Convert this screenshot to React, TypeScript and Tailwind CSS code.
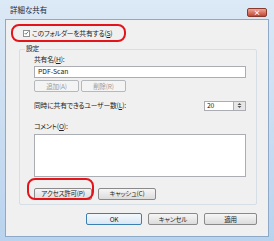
import React from "react"

const font = "font-['Noto_Sans_CJK_JP',sans-serif] [font-feature-settings:'palt']"

const Btn: React.FC<{ label: string; w: string; disabled?: boolean; primary?: boolean }> = ({
  label,
  w,
  disabled,
  primary,
}) => (
  <div
    className={`${w} h-[12px] flex items-center justify-center rounded-[2px] border text-[6.5px] leading-none ${
      disabled
        ? "border-[#b5b9bc] bg-[#f4f4f4] text-[#9a9a9a]"
        : primary
        ? "border-[#3c7fb1] bg-gradient-to-b from-[#f4f9fd] to-[#d9e7f3] text-[#222]"
        : "border-[#8a8a8a] bg-gradient-to-b from-[#f6f6f6] to-[#dcdcdc] text-[#222]"
    }`}
  >
    {label}
  </div>
)

const App: React.FC = () => {
  return (
    <div className={`w-[274px] h-[241px] overflow-hidden bg-gradient-to-b from-[#dce9f6] to-[#b9d3ee] flex flex-col ${font}`}>
      {/* Title bar */}
      <div className="h-[19px] flex items-start justify-between pl-[10px] pr-[7px] shrink-0">
        <span className="text-[7.5px] text-[#1e2a3a] mt-[6px] leading-none">詳細な共有</span>
        <div className="mt-[8px] w-[20px] h-[9px] rounded-[2px] border border-[#8a3a2c] bg-gradient-to-b from-[#e9a89a] to-[#c4442c] flex items-center justify-center text-white text-[7px] leading-none font-bold">
          ×
        </div>
      </div>

      {/* Client area */}
      <div className="relative flex-1 ml-[5px] mr-[5px] mb-[4px] bg-[#f0f0f0] border border-[#8ea9c7] text-[#222] text-[6.8px] tracking-[-0.2px]">
        {/* Share checkbox */}
        <div className="flex items-center h-[10px] mt-[8px] ml-[17px] gap-[2px]">
          <div className="w-[7px] h-[7px] border border-[#8e8f8f] bg-white flex items-center justify-center">
            <svg viewBox="0 0 8 8" className="w-[6px] h-[6px]">
              <path d="M1 4 L3 6 L7 1.5" stroke="#4a5f7a" strokeWidth="1.3" fill="none" />
            </svg>
          </div>
          <span className="leading-none">このフォルダーを共有する(<span className="underline">S</span>)</span>
        </div>

        {/* Group box */}
        <div className="relative mt-[11px] ml-[13px] mr-[11px] h-[156px] border border-[#d5dfe5] rounded-[2px] pl-[14px] pr-[10px]">
          <span className="absolute -top-[5px] left-[5px] px-[1px] bg-[#f0f0f0] leading-none">設定</span>
          <div className="mt-[6px] leading-none">共有名(<span className="underline">H</span>):</div>
          <div className="mt-[3px] h-[12px] border border-[#abadb3] bg-white flex items-center pl-[3px] leading-none tracking-normal">
            PDF-Scan
          </div>
          <div className="mt-[2px] flex gap-[2px]">
            <Btn label="追加(A)" w="w-[45px]" disabled />
            <Btn label="削除(R)" w="w-[45px]" disabled />
          </div>
          <div className="mt-[9px] flex items-center justify-between">
            <span className="leading-none">同時に共有できるユーザー数(<span className="underline">L</span>):</span>
            <div className="flex h-[10px]">
              <div className="w-[30px] h-full border border-[#abadb3] bg-white leading-none flex items-center pl-[2px]">20</div>
              <div className="w-[12px] h-full border border-l-0 border-[#abadb3] bg-[#e6e6e6] flex flex-col items-center justify-center gap-[1px]">
                <svg viewBox="0 0 6 3" className="w-[5px] h-[2px]"><path d="M0 3 L3 0 L6 3Z" fill="#555" /></svg>
                <svg viewBox="0 0 6 3" className="w-[5px] h-[2px]"><path d="M0 0 L3 3 L6 0Z" fill="#555" /></svg>
              </div>
            </div>
          </div>
          <div className="mt-[12px] leading-none">コメント(<span className="underline">O</span>):</div>
          <div className="mt-[4px] h-[43px] border border-[#abadb3] bg-white" />
          <div className="mt-[11px] flex gap-[6px]">
            <Btn label="アクセス許可(P)" w="w-[58px]" />
            <Btn label="キャッシュ(C)" w="w-[58px]" />
          </div>
        </div>

        {/* Dialog buttons */}
        <div className="mt-[8px] flex justify-end gap-[6px] mr-[11px]">
          <Btn label="OK" w="w-[56px]" primary />
          <Btn label="キャンセル" w="w-[50px]" />
          <Btn label="適用" w="w-[53px]" />
        </div>

        {/* Red highlight marks */}
        <div className="absolute left-[5px] top-[4px] w-[115px] h-[18px] border-2 border-[#e4141b] rounded-[8px]" />
        <div className="absolute left-[21px] top-[158px] w-[67px] h-[22px] border-2 border-[#e4141b] rounded-[8px]" />
      </div>
    </div>
  )
}

export default App
